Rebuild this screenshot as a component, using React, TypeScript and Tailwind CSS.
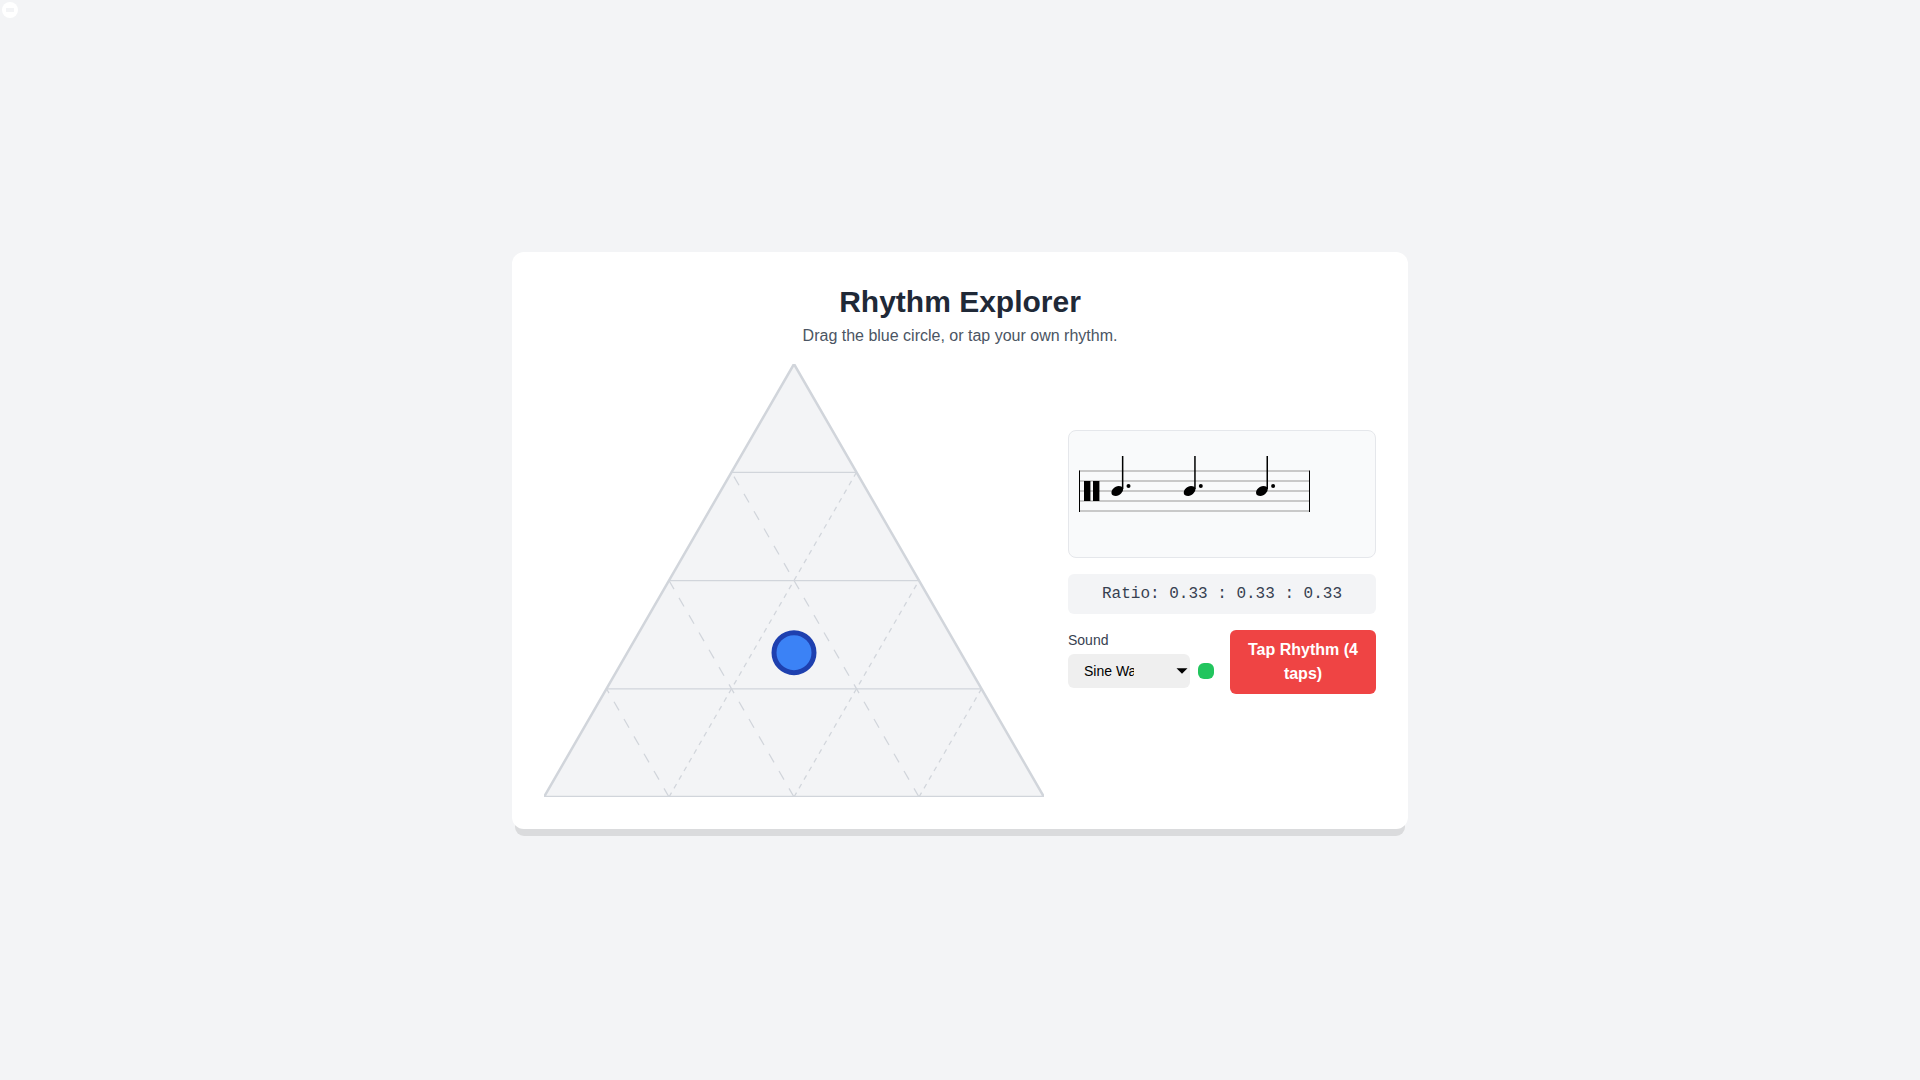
import { useState } from "react";

const SIDE = 500;
const HEIGHT = 433;
const CELL_W = SIDE / 4;
const CELL_H = HEIGHT / 4;

const sounds = [
  { value: "sine",     label: "Sine Wave" },
  { value: "square",   label: "Square Wave" },
  { value: "triangle", label: "Triangle Wave" },
  { value: "sawtooth", label: "Sawtooth Wave" },
];

const staffLines = [40, 50, 60, 70, 80];
const notes = [42.3, 114.6, 186.9];

function RhythmTriangle() {
  return (
    <svg viewBox={`0 0 ${SIDE} ${HEIGHT}`} className="block w-full max-w-[500px] overflow-hidden">
      <polygon
        points={`${SIDE / 2},0 0,${HEIGHT} ${SIDE},${HEIGHT}`}
        fill="#f3f4f6"
        stroke="#d1d5db"
        strokeWidth={2.5}
      />

      {/* Grid, each diagonal starts on the base */}
      {[1, 2, 3].map((i) => {
        const x = i * CELL_W;
        const y = i * CELL_H;
        const half = (i * CELL_W) / 2;
        return (
          <g key={i} stroke="#d1d5db" strokeWidth={1.25}>
            <line x1={SIDE / 2 - half} y1={y} x2={SIDE / 2 + half} y2={y} />
            <line x1={x} y1={HEIGHT} x2={x - half} y2={HEIGHT - y} strokeDasharray="10 10" />
            <line
              x1={SIDE - x}
              y1={HEIGHT}
              x2={SIDE - x + half}
              y2={HEIGHT - y}
              strokeDasharray="5 5"
            />
          </g>
        );
      })}

      <circle
        cx={SIDE / 2}
        cy={(HEIGHT * 2) / 3}
        r={20}
        fill="#3b82f6"
        stroke="#1e40af"
        strokeWidth={5}
        className="cursor-grab"
      />
    </svg>
  );
}

function Notation() {
  return (
    <svg width="280" height="126" viewBox="0 0 280 126" className="block">
      {staffLines.map((y) => (
        <line key={y} x1={10} x2={240} y1={y} y2={y} stroke="#c9c9c9" strokeWidth={2} />
      ))}
      <rect x={10} y={39.5} width={1} height={41.5} />
      <rect x={240} y={39.5} width={1} height={41.5} />

      {/* Percussion clef */}
      <rect x={15} y={50} width={6.4} height={20} />
      <rect x={24} y={50} width={6.4} height={20} />

      {/* Dotted quarter notes */}
      {notes.map((x) => (
        <g key={x} transform={`translate(${x} 60)`}>
          <path d="M0.2 2.2C-0.3-0.8 3.4-4.9 7.4-4.9C10-4.9 11.6-3.9 11.8-2.2C12.2 0.8 8.4 4.9 4.6 4.9C2 4.9 0.4 3.9 0.2 2.2Z" />
          <rect x={10.6} y={-35} width={1.5} height={33} />
          <circle cx={17.2} cy={-5} r={2} />
        </g>
      ))}
    </svg>
  );
}

export default function App() {
  const [sound, setSound] = useState("sine");

  return (
    <div className="min-h-screen bg-[#f3f4f6] flex items-center justify-center p-4 font-['Liberation_Sans',Arial,sans-serif]">
      <button type="button" aria-label="Collapse" className="absolute top-0.5 left-0.5 size-4">
        <svg viewBox="0 0 16 16" className="size-4">
          <circle cx={8} cy={8} r={8} fill="#fff" />
          <rect x={4} y={6} width={8} height={4} fill="#f3f4f6" />
        </svg>
      </button>

      <main className="w-full max-w-4xl bg-white rounded-xl p-8 shadow-[0_10px_0_-3px_rgba(0,0,0,0.1)]">
        <header className="text-center mb-4">
          <h1 className="text-3xl font-bold text-[#1f2937]">Rhythm Explorer</h1>
          <p className="mt-1 text-[#4b5563]">Drag the blue circle, or tap your own rhythm.</p>
        </header>

        <div className="flex flex-col md:flex-row items-center gap-6">
          <RhythmTriangle />

          {/* Controls */}
          <div className="w-full md:flex-1 min-w-0 flex flex-col gap-4">
            <div className="h-32 bg-[#f9fafb] border border-[#e5e7eb] rounded-lg overflow-hidden">
              <Notation />
            </div>

            <div className="bg-[#f3f4f6] rounded-md py-2 text-center text-[#374151] font-['Liberation_Mono',monospace]">
              Ratio: 0.33 : 0.33 : 0.33
            </div>

            <div className="grid grid-cols-2 gap-4 items-start">
              <div>
                <label htmlFor="sound" className="block mb-1 text-sm text-[#374151]">
                  Sound
                </label>
                <div className="flex items-center gap-2">
                  <div className="relative flex-1 min-w-0">
                    <select
                      id="sound"
                      value={sound}
                      onChange={(e) => setSound(e.target.value)}
                      className="block w-full h-[34px] pl-4 pr-14 appearance-none rounded-md bg-[#efefef] text-sm text-black"
                    >
                      {sounds.map((s) => (
                        <option key={s.value} value={s.value}>{s.label}</option>
                      ))}
                    </select>
                    <svg
                      viewBox="0 0 12 6"
                      className="absolute right-0.5 top-1/2 -translate-y-1/2 w-3 pointer-events-none"
                    >
                      <path d="M0.5 0.3H11.5L6 5.7Z" />
                    </svg>
                  </div>
                  <span className="size-4 rounded-md bg-[#22c55e]" />
                </div>
              </div>

              <button
                type="button"
                className="bg-[#ef4444] text-white font-bold rounded-md px-4 py-2"
              >
                Tap Rhythm (4 taps)
              </button>
            </div>

            {/* Tap status */}
            <p className="h-5 text-sm text-center" aria-live="polite" />
          </div>
        </div>
      </main>
    </div>
  );
}
